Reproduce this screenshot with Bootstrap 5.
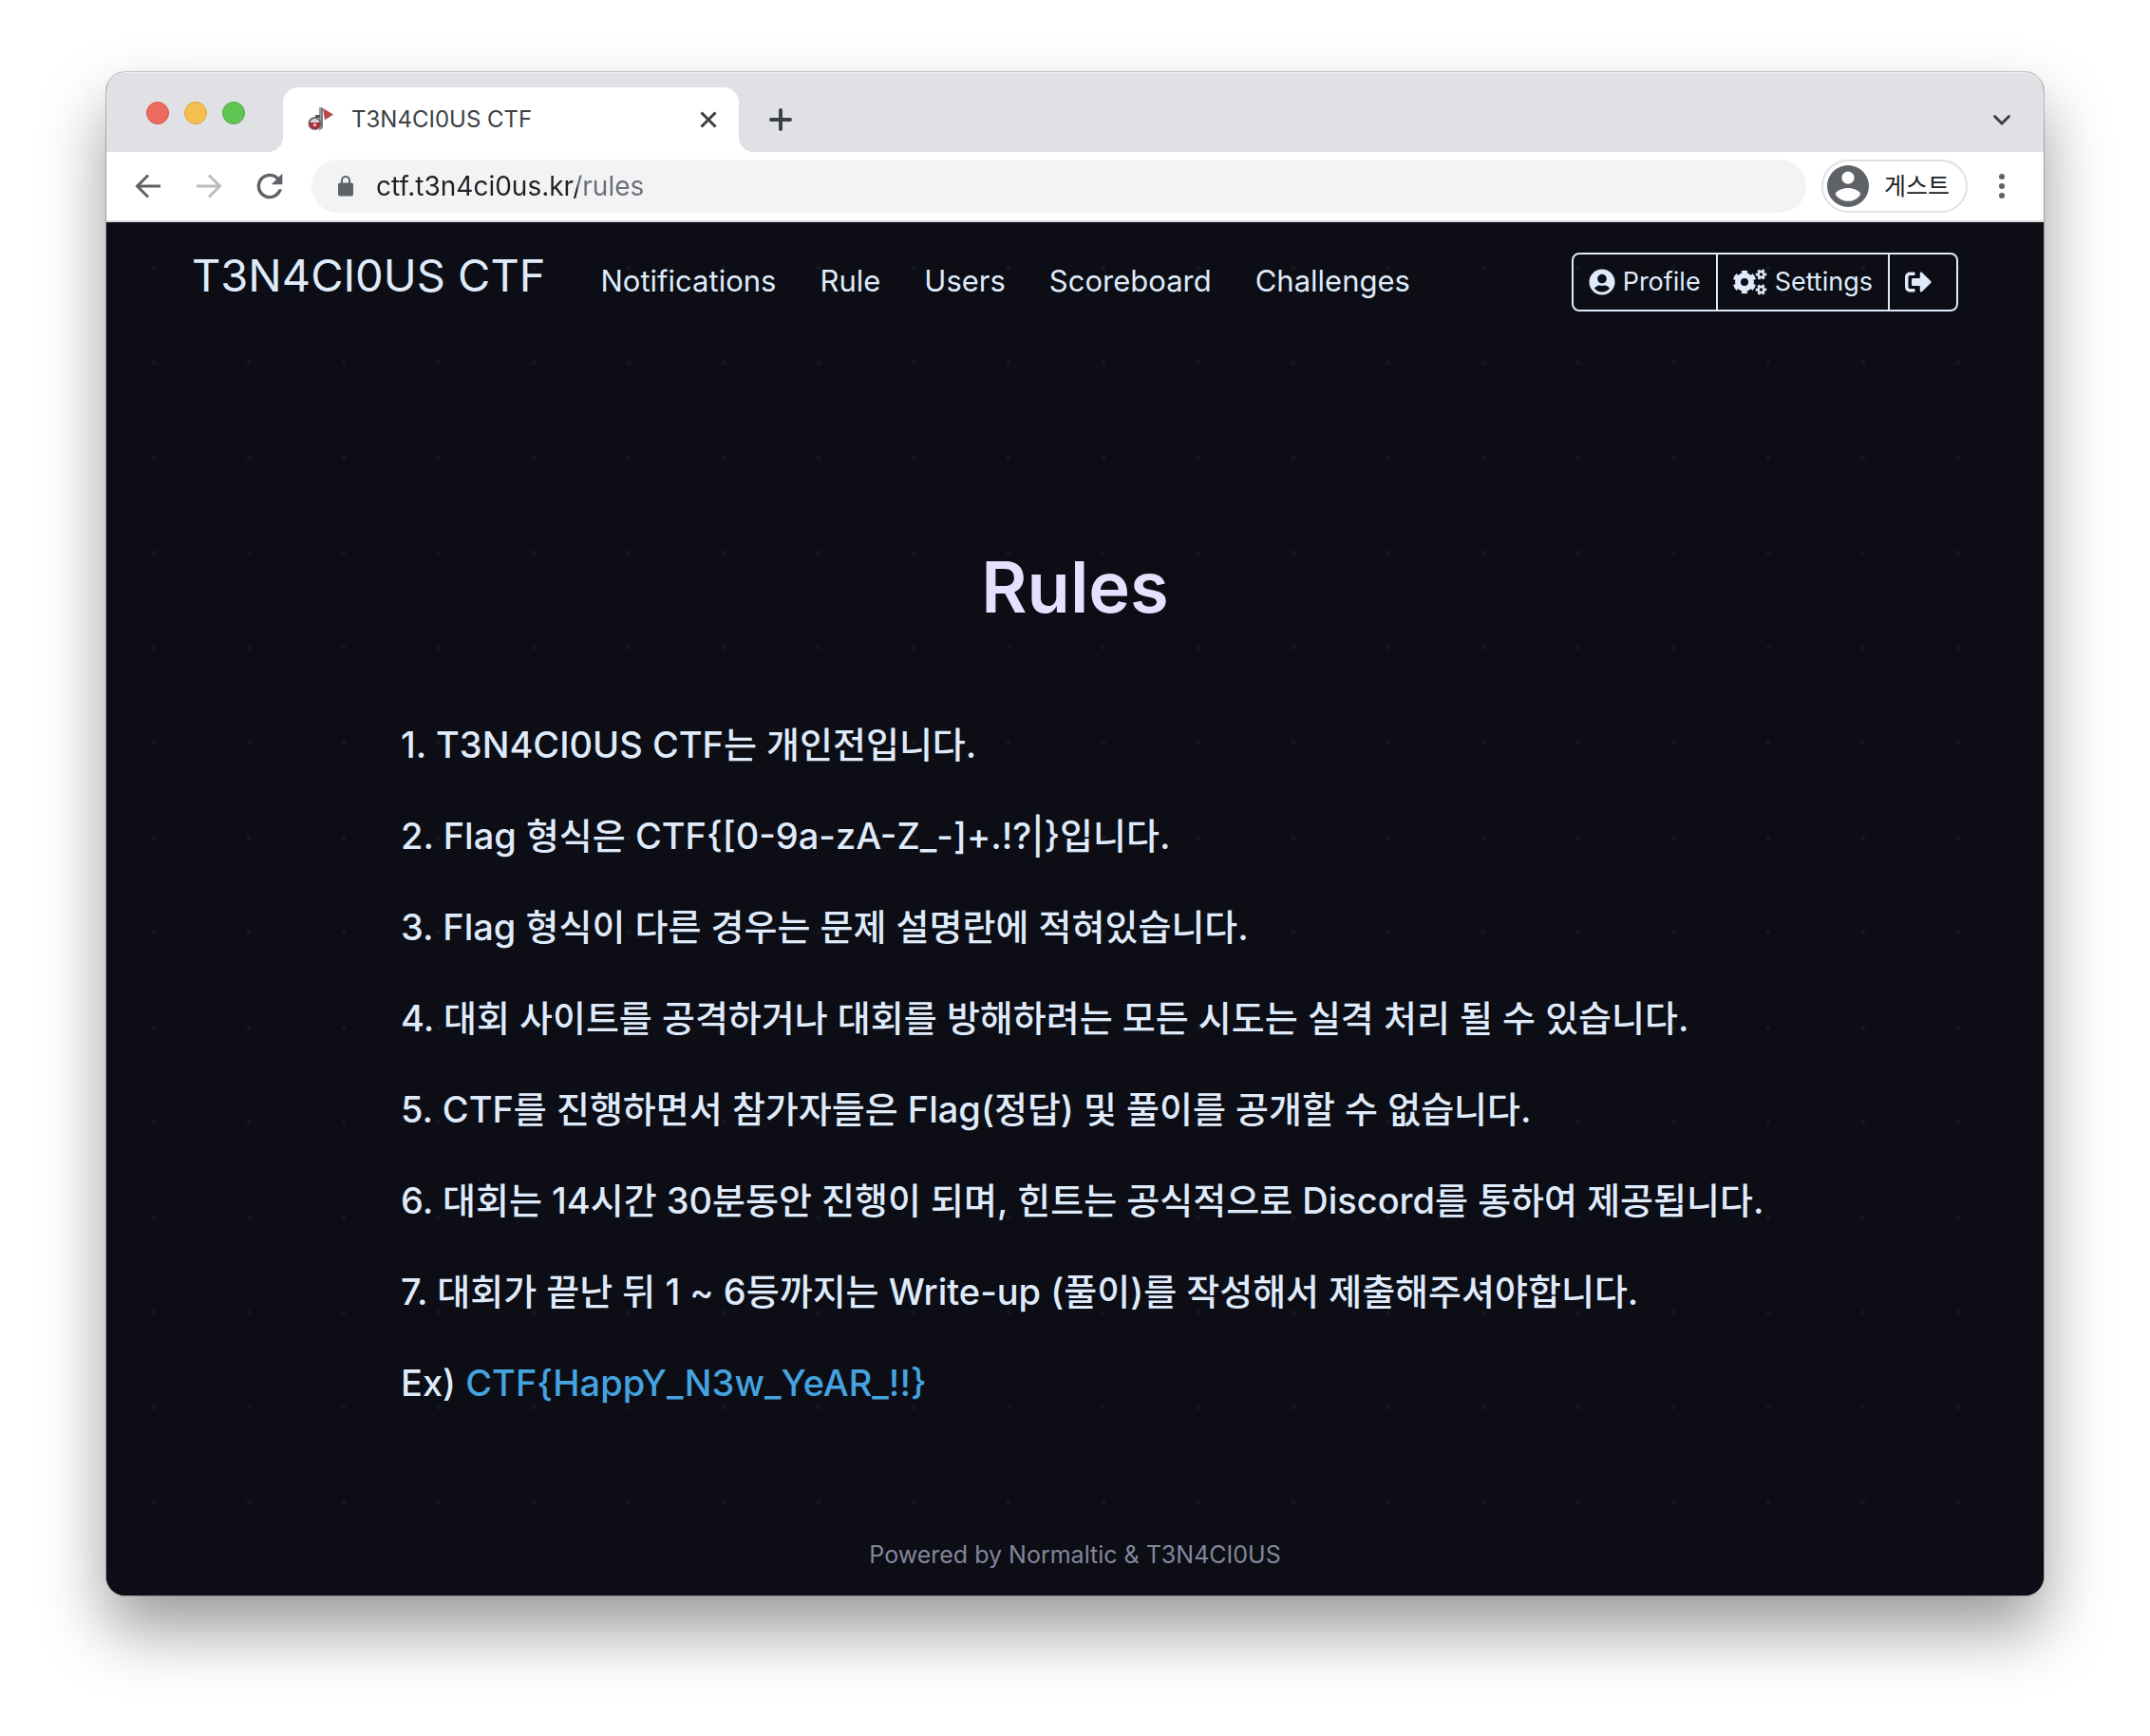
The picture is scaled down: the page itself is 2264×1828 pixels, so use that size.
<!DOCTYPE html>
<html lang="ko">
<head>
<meta charset="utf-8">
<meta name="viewport" content="width=device-width, initial-scale=1">
<title>T3N4CI0US CTF</title>
<link href="https://cdn.jsdelivr.net/npm/bootstrap@5.3.0/dist/css/bootstrap.min.css" rel="stylesheet">
<style>
  body { font-family: Inter, "Noto Sans CJK KR", sans-serif; background: #fff; padding: 76px 112px 148px; }
  button { font-family: inherit; }
  svg { display: block; flex: none; }
  .browser { min-width: 0; border-radius: 20px; background: #0c0d15; box-shadow: 0 0 0 1px rgba(0,0,0,.22), 0 36px 68px rgba(0,0,0,.4); }
  .tabstrip { height: 84px; background: #dfe1e5; border-radius: 20px 20px 0 0; box-shadow: inset 0 2px 0 -1px #f3f4f5; padding: 0 24px 0 42px; }
  .lights { gap: 16px; padding-top: 2px; margin-right: 40px; }
  .light { width: 24px; height: 24px; border-radius: 50%; border: 1px solid; padding: 0; }
  .light-close { background: #ed6a5e; border-color: #d8574c; }
  .light-min { background: #f5bf4f; border-color: #dba63c; }
  .light-max { background: #61c554; border-color: #51aa42; }
  .tab-open { width: 480px; height: 68px; background: #fff; border-radius: 16px 16px 0 0; padding: 0 18px 0 26px; gap: 18px; position: relative; font-size: 24px; line-height: 32px; color: #3c4043; }
  .tab-open::before, .tab-open::after { content: ""; position: absolute; bottom: 0; width: 16px; height: 16px; }
  .tab-open::before { left: -16px; background: radial-gradient(circle at 0 0, transparent 16px, #fff 16px); }
  .tab-open::after { right: -16px; background: radial-gradient(circle at 100% 0, transparent 16px, #fff 16px); }
  .strip-end { height: 68px; flex: 1; margin-left: 24px; }
  .icon-btn { border: 0; background: none; padding: 0; color: #5f6368; }
  .icon-dark { color: #3c4043; }
  .toolbar { height: 74px; background: #fff; border-bottom: 2px solid #dadce0; padding: 0 24px; gap: 16px; }
  .tools { gap: 24px; margin-right: 8px; }
  .omnibox { height: 56px; border-radius: 28px; background: #f1f3f4; padding: 0 28px; gap: 24px; color: #5f6368; }
  .url { border: 0; outline: 0; padding: 0; width: 100%; font-size: 28px; line-height: 40px; color: transparent; -webkit-text-fill-color: transparent; background: linear-gradient(90deg, #202124 212px, #6b6e72 212px); -webkit-background-clip: text; background-clip: text; }
  .guest { height: 56px; border-radius: 28px; border: 2px solid #e0e1e3; background: #fff; padding: 0 17px 0 4px; gap: 16px; font-size: 25px; line-height: 32px; color: #202124; }
  .page { background: radial-gradient(circle at 50px 50px, #15161e 2px, transparent 3px) 0 -2px / 100px 100px #0c0d15; border-radius: 0 0 20px 20px; color: #dfeafa; }
  .topnav { padding: 26px 90px 0; }
  .topnav a { color: #dfeafa; text-decoration: none; }
  .brand { font-size: 47px; line-height: 60px; margin-right: 58px; }
  .links { gap: 46px; font-size: 31px; line-height: 40px; }
  .account { margin-top: 6px; }
  .account .btn { --bs-btn-color: #dfeafa; --bs-btn-border-color: #dfeafa; --bs-btn-border-width: 2px; --bs-btn-border-radius: 8px; --bs-btn-font-size: 27px; --bs-btn-padding-x: 16px; --bs-btn-padding-y: 9px; line-height: 40px; gap: 8px; }
  .account.btn-group > .btn:not(:first-child) { margin-left: -2px; }
  .account .btn:last-child { padding-right: 26px; }
  .page h1 { font-size: 74px; line-height: 96px; margin: 242px 0 94px; color: #e6e0ff; font-weight: 600; }
  .rules { padding-left: 310px; }
  .rules p { font-size: 38px; line-height: 48px; margin: 0 0 48px; font-weight: 500; }
  .sample { color: #45a3df; }
  .credit { font-size: 25px; line-height: 32px; color: #84869c; padding-bottom: 27px; }
</style>
<script src="https://cdn.jsdelivr.net/npm/bootstrap@5.3.0/dist/js/bootstrap.bundle.min.js"></script>
</head>
<body class="min-vh-100 d-flex">
<div class="browser flex-grow-1 d-flex flex-column">
  <div class="tabstrip d-flex align-items-end">
    <div class="lights d-flex align-self-stretch align-items-center">
      <button class="light light-close" aria-label="Close window"></button>
      <button class="light light-min" aria-label="Minimize"></button>
      <button class="light light-max" aria-label="Zoom"></button>
    </div>
    <div class="tab-open d-flex align-items-center">
      <svg width="28" height="28" viewBox="0 0 28 28"><path d="M16 2l11 6.500-9 6z" fill="#b9484d"/><path d="M12 1h4v22l-4 3z" fill="#9b9da0"/><path d="M14 2h2v20h-2z" fill="#77797c"/><circle cx="7.500" cy="18" r="6" fill="#d8d4d5" stroke="#77696b" stroke-width="2"/><path d="M1.500 17h12a6 6 0 0 1-12 2z" fill="#a82f3b"/><path d="M6 18h3v3H6z" fill="#e9b9bc"/><path d="M8 9h5v3H8z" fill="#55565a"/></svg>
      <span class="flex-grow-1">T3N4CI0US CTF</span>
      <button class="icon-btn icon-dark" aria-label="Close tab"><svg width="28" height="28" viewBox="0 0 28 28" fill="none" stroke="currentColor" stroke-width="3"><path d="M6.500 6.500l15 15M21.500 6.500l-15 15"/></svg></button>
    </div>
    <div class="strip-end d-flex align-items-center justify-content-between">
      <button class="icon-btn icon-dark" aria-label="New tab"><svg width="40" height="40" viewBox="0 0 40 40" fill="none" stroke="currentColor" stroke-width="4" stroke-linecap="round"><path d="M20 10v20M10 20h20"/></svg></button>
      <button class="icon-btn icon-dark" aria-label="Search tabs"><svg width="40" height="40" viewBox="0 0 40 40" fill="none" stroke="currentColor" stroke-width="3" stroke-linecap="round"><path d="M12.500 16.500l7.500 7.500 7.500-7.500"/></svg></button>
    </div>
  </div>
  <div class="toolbar d-flex align-items-center">
    <div class="tools d-flex">
      <button class="icon-btn" aria-label="Back"><svg width="40" height="40" viewBox="0 0 40 40" fill="none" stroke="currentColor" stroke-width="3"><path d="M33 20H9M20 8.500L8.500 20 20 31.500"/></svg></button>
      <button class="icon-btn" aria-label="Forward" disabled><svg width="40" height="40" viewBox="0 0 40 40" fill="none" stroke="#b9bbbe" stroke-width="3"><path d="M7 20h24M20 8.500L31.500 20 20 31.500"/></svg></button>
      <button class="icon-btn" aria-label="Reload"><svg width="40" height="40" viewBox="0 0 24 24" fill="currentColor"><path d="M17.650 6.350A7.960 7.960 0 0 0 12 4a8 8 0 1 0 7.730 10h-2.080A6 6 0 1 1 12 6c1.660 0 3.140.69 4.220 1.780L13 11h7V4z"/></svg></button>
    </div>
    <div class="omnibox d-flex align-items-center flex-grow-1">
      <svg width="16" height="24" viewBox="0 0 16 24"><path d="M4 10V6a4 4 0 0 1 8 0v4" fill="none" stroke="currentColor" stroke-width="2"/><rect y="8.500" width="16" height="14" rx="2" fill="currentColor"/></svg>
      <input class="url" type="text" aria-label="Address" value="ctf.t3n4ci0us.kr/rules">
    </div>
    <button class="guest d-flex align-items-center text-nowrap"><svg width="44" height="44" viewBox="2 2 20 20" fill="#5f6368"><path d="M12 2a10 10 0 1 0 0 20 10 10 0 0 0 0-20zm0 3a3 3 0 1 1 0 6 3 3 0 0 1 0-6zm0 14.200c-2.500 0-4.710-1.280-6-3.220.03-1.990 4-3.080 6-3.080s5.970 1.090 6 3.080A7.200 7.200 0 0 1 12 19.200z"/></svg>게스트</button>
    <button class="icon-btn" aria-label="Menu"><svg width="40" height="40" viewBox="0 0 40 40" fill="currentColor"><circle cx="20" cy="10" r="3"/><circle cx="20" cy="20" r="3"/><circle cx="20" cy="30" r="3"/></svg></button>
  </div>

  <div class="page flex-grow-1 d-flex flex-column">
    <nav class="topnav d-flex align-items-baseline text-nowrap">
      <a class="brand" href="#">T3N4CI0US CTF</a>
      <div class="links d-flex flex-grow-1">
        <a href="#">Notifications</a><a href="#">Rule</a><a href="#">Users</a><a href="#">Scoreboard</a><a href="#">Challenges</a>
      </div>
      <div class="account btn-group align-self-start">
        <button class="btn d-flex align-items-center"><svg width="28" height="28" viewBox="0 0 496 512" fill="currentColor"><path d="M248 8C111 8 0 119 0 256s111 248 248 248 248-111 248-248S385 8 248 8zm0 96c48.600 0 88 39.400 88 88s-39.400 88-88 88-88-39.400-88-88 39.400-88 88-88zm0 344c-58.700 0-111.300-26.600-146.500-68.200 18.800-35.400 55.600-59.800 98.500-59.800 2.400 0 4.800.4 7.100 1.100 13 4.200 26.600 6.900 40.900 6.900 14.300 0 28-2.700 40.900-6.900 2.300-.7 4.700-1.100 7.100-1.100 42.900 0 79.700 24.400 98.500 59.800C359.300 421.400 306.700 448 248 448z"/></svg>Profile</button>
        <button class="btn d-flex align-items-center"><svg width="36" height="28" viewBox="0 0 36 28" fill="none" stroke="currentColor"><circle cx="12" cy="14" r="7" stroke-width="6"/><circle cx="12" cy="14" r="10.500" stroke-width="3.500" pathLength="60" stroke-dasharray="5.500 4.500" stroke-dashoffset="-2.250"/><g stroke-width="2.500"><circle cx="29.500" cy="6" r="3"/><circle cx="29.500" cy="22" r="3"/></g><g stroke-width="2"><circle cx="29.500" cy="6" r="4.800" pathLength="60" stroke-dasharray="5.500 4.500" stroke-dashoffset="-7"/><circle cx="29.500" cy="22" r="4.800" pathLength="60" stroke-dasharray="5.500 4.500" stroke-dashoffset="-7"/></g></svg>Settings</button>
        <button class="btn d-flex align-items-center" aria-label="Logout"><svg width="28" height="28" viewBox="0 0 512 512" fill="currentColor"><path d="M497 273L329 441c-15 15-41 4.500-41-17v-96H152c-13.300 0-24-10.700-24-24v-96c0-13.300 10.700-24 24-24h136V88c0-21.400 25.900-32 41-17l168 168c9.300 9.400 9.300 24.600 0 34zM192 436v-40c0-6.600-5.400-12-12-12H96c-17.700 0-32-14.300-32-32V160c0-17.700 14.300-32 32-32h84c6.600 0 12-5.400 12-12V76c0-6.600-5.400-12-12-12H96c-53 0-96 43-96 96v192c0 53 43 96 96 96h84c6.600 0 12-5.400 12-12z"/></svg></button>
      </div>
    </nav>
    <main>
      <h1 class="text-center">Rules</h1>
      <div class="rules text-nowrap">
        <p>1. T3N4CI0US CTF는 개인전입니다.</p>
        <p>2. Flag 형식은 CTF{[0-9a-zA-Z_-]+.!?|}입니다.</p>
        <p>3. Flag 형식이 다른 경우는 문제 설명란에 적혀있습니다.</p>
        <p>4. 대회 사이트를 공격하거나 대회를 방해하려는 모든 시도는 실격 처리 될 수 있습니다.</p>
        <p>5. CTF를 진행하면서 참가자들은 Flag(정답) 및 풀이를 공개할 수 없습니다.</p>
        <p>6. 대회는 14시간 30분동안 진행이 되며, 힌트는 공식적으로 Discord를 통하여 제공됩니다.</p>
        <p>7. 대회가 끝난 뒤 1 ~ 6등까지는 Write-up (풀이)를 작성해서 제출해주셔야합니다.</p>
        <p>Ex) <span class="sample">CTF{HappY_N3w_YeAR_!!}</span></p>
      </div>
    </main>
    <footer class="credit text-center mt-auto">Powered by Normaltic &amp; T3N4CI0US</footer>
  </div>
</div>
</body>
</html>
